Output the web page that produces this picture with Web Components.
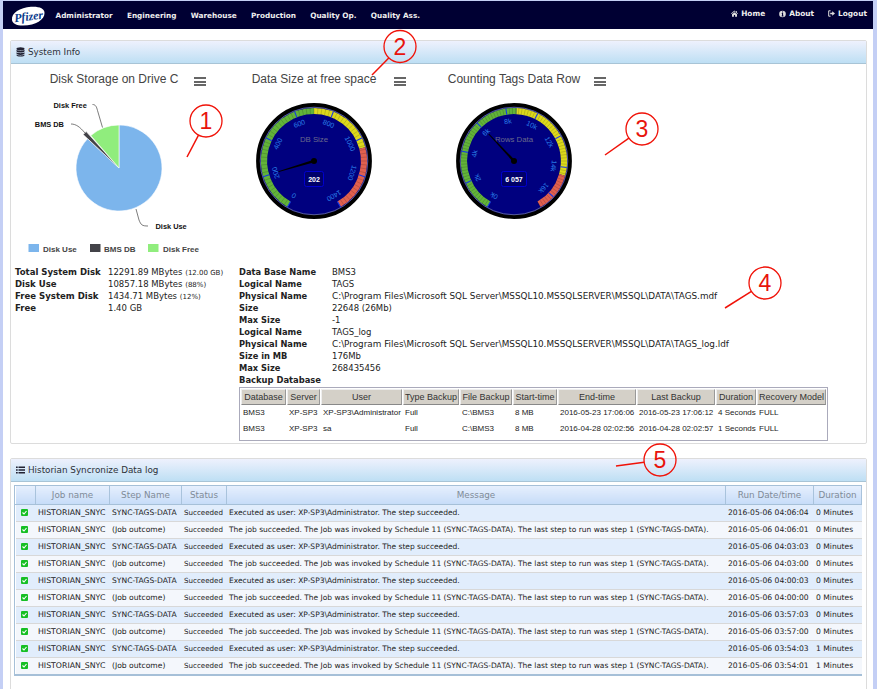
<!DOCTYPE html>
<html lang="en"><head><meta charset="utf-8"><title>System Info</title>
<style>
html,body{margin:0;padding:0;height:689px;overflow:hidden;background:#c4cff5}
body{font-family:"DejaVu Sans",sans-serif;color:#222}
#page{position:relative;background:#fff;margin:1px 4px 0 3px;height:688px;display:flex;flex-direction:column}
</style></head><body>
<div id="page">
<pf-nav></pf-nav>
<pf-panel heading="System Info" icon="db" style="margin:11px 6px 0 7px">
  <pf-charts>
    <pf-chart heading="Disk Storage on Drive C"><pf-pie></pf-pie></pf-chart>
    <pf-chart heading="Data Size at free space"><pf-gauge label="DB Size" max="1400" step="200" value="202" text="202" yellow="0" red="75" suffix=""></pf-gauge></pf-chart>
    <pf-chart heading="Counting Tags Data Row"><pf-gauge label="Rows Data" max="17000" step="2000" value="6057" text="6 057" yellow="3" red="106" suffix="k"></pf-gauge></pf-chart>
  </pf-charts>
  <pf-info></pf-info>
</pf-panel>
<pf-panel heading="Historian Syncronize Data log" icon="list" style="margin:14px 6px -6px 7px;flex:1">
  <pf-grid></pf-grid>
</pf-panel>
<pf-callout n="1" cx="203" cy="120" x2="184" y2="156"></pf-callout>
<pf-callout n="2" cx="397" cy="45.500" x2="369" y2="74"></pf-callout>
<pf-callout n="3" cx="639" cy="128" x2="602" y2="154"></pf-callout>
<pf-callout n="4" cx="762" cy="282" x2="722" y2="307"></pf-callout>
<pf-callout n="5" cx="657" cy="459" x2="613" y2="465"></pf-callout>
</div>
<script>
const def=(name,css,html)=>customElements.define(name,class extends HTMLElement{
  connectedCallback(){ if(this.shadowRoot) return;
    const s=this.attachShadow({mode:'open'});
    s.innerHTML='<style>'+css+'</style>'+(typeof html==='function'?html(this):html);
  }});
const ICON={
 db:'<svg width="9" height="10" viewBox="0 0 9 10"><g fill="#223"><ellipse cx="4.5" cy="1.7" rx="4" ry="1.5"/><path d="M.5 2.8c1.6 1.2 6.4 1.2 8 0v1.4c0 .9-1.8 1.3-4 1.3s-4-.4-4-1.3z"/><path d="M.5 5.3c1.6 1.2 6.4 1.2 8 0v1.3c0 .9-1.8 1.3-4 1.3s-4-.4-4-1.3z"/><path d="M.5 7.6c1.6 1.2 6.4 1.2 8 0v.7c0 .9-1.8 1.3-4 1.3s-4-.4-4-1.3z"/></g></svg>',
 list:'<svg width="9" height="8" viewBox="0 0 9 8"><path fill="#223" d="M0 .5h1.7v1.6H0zM2.500 .5H9v1.6H2.500zM0 3.200h1.700v1.600H0zM2.500 3.200H9v1.600H2.500zM0 5.900h1.700v1.600H0zM2.500 5.900H9v1.600H2.500z"/></svg>',
 home:'<svg width="7" height="7" viewBox="0 0 7 7"><path fill="#ddd" d="M3.5.6 0 3.6l.4.5L3.5 1.500l3.100 2.600.4-.5-1.200-1V.9h-.9v1.400zM1 4.300v2.400h1.900V5h1.200v1.700H6V4.300L3.500 2.200z"/></svg>',
 about:'<svg width="7" height="8" viewBox="0 0 7 8"><circle cx="3.5" cy="4" r="3.3" fill="#ddd"/><path fill="#003" d="M3 1.500h1.100v1H3zM2.700 3h1.400v2.600h.4v.8H2.600v-.8H3V3.800h-.3z"/></svg>',
 logout:'<svg width="7" height="7" viewBox="0 0 7 7"><path fill="none" stroke="#ddd" d="M2.600 .8H.7v5.400h1.900"/><path fill="#ddd" d="M2.200 2.700h2V1.200L7 3.500 4.200 5.800V4.300h-2z"/></svg>'};

def('pf-nav',`:host{display:flex;align-items:stretch;height:28px;background:#003;color:#eee;font:bold 7.3px "DejaVu Sans",sans-serif;flex:none}
.logo{margin:5px 0 0 8px;width:34px;height:20px;flex:none}
ul{display:flex;list-style:none;margin:0;padding:0}
.m{margin-left:10.500px;gap:14.300px;align-items:center;height:29px;white-space:nowrap}
.r{margin-left:auto;margin-right:6px;gap:14px;height:25px;align-items:center;font-size:7.400px}
.r li{display:flex;align-items:center;gap:3px}`,
`<svg class="logo" viewBox="0 0 34 20"><path fill="#fff" d="M1 14C0 7 9 1.500 20 .8c8-.5 13.500 1.500 13.500 6.200C33.500 13.500 25 19.500 12 19.500 5 19.500 1.500 17.500 1 14z"/><text x="3" y="14.500" font-family="Liberation Serif,serif" font-style="italic" font-weight="bold" font-size="12" fill="#0b3b8c" textLength="29" transform="rotate(-7 17 10)">Pfizer</text></svg>
<ul class="m"><li>Administrator</li><li>Engineering</li><li>Warehouse</li><li>Production</li><li>Quality Op.</li><li>Quality Ass.</li></ul>
<ul class="r"><li>${ICON.home}Home</li><li>${ICON.about}About</li><li>${ICON.logout}Logout</li></ul>`);

def('pf-panel',`:host{display:flex;flex-direction:column;border:1px solid #dcdcdc;border-radius:2px;background:#fff;flex:none;min-height:0}
header{height:23px;box-sizing:border-box;flex:none;display:flex;align-items:center;gap:3px;padding-left:5px;font-size:8.800px;color:#2c3138;background:linear-gradient(#eef1fd,#bedff4);border-bottom:1px solid #a8c4d6}
svg{display:block}
.b{flex:1;min-height:0}`,
h=>`<header>${ICON[h.getAttribute('icon')]}<span>${h.getAttribute('heading')}</span></header><div class="b"><slot></slot></div>`);

def('pf-charts',`:host{display:flex;padding:5px 0 0 3px;height:197px}`,'<slot></slot>');

def('pf-chart',`:host{display:block;position:relative;width:200px;flex:none}
h3{margin:0;height:21px;padding-top:3px;box-sizing:border-box;text-align:center;font:12px/14px "Liberation Sans",sans-serif;color:#444;white-space:nowrap}
.ham{position:absolute;left:180px;top:8px;width:12px;height:9px;display:flex;flex-direction:column;justify-content:space-between}
.ham i{display:block;height:2px;background:#666}`,
h=>`<h3>${h.getAttribute('heading')}</h3><div class="ham"><i></i><i></i><i></i></div><slot></slot>`);

function polar(cx,cy,r,deg){const a=(deg-90)*Math.PI/180;return [cx+r*Math.cos(a),cy+r*Math.sin(a)]}
function wedge(cx,cy,r,a,b){const p=polar(cx,cy,r,a),q=polar(cx,cy,r,b);return `M${cx} ${cy}L${p[0]} ${p[1]}A${r} ${r} 0 ${b-a>180?1:0} 1 ${q[0]} ${q[1]}Z`}

def('pf-pie',`:host{display:block;width:200px;height:172px}
svg{display:block}
text{font-family:"Liberation Sans",sans-serif;font-weight:bold}
.d{font-size:7.400px;fill:#111}.l{font-size:8px;fill:#444}`,
()=>{const cx=105,cy=78,r=43;
return `<svg width="200" height="172" viewBox="0 0 200 172">
<path d="${wedge(cx,cy,r,0,313)}" fill="#7cb5ec" stroke="#fff" stroke-width=".6"/>
<path d="${wedge(cx,cy,49,313,318)}" fill="#434348" stroke="#fff" stroke-width=".6"/>
<path d="${wedge(cx,cy,r,319,360)}" fill="#90ed7d" stroke="#fff" stroke-width=".6"/>
<g fill="none" stroke="#444" stroke-width=".7">
<path d="M78.500 14.500c3 0 4 2 5 6l5 17"/><path d="M57 34c5 0 9 3 14 9"/><path d="M134 136c-6 0-7-1-9-6l-3-11"/></g>
<text class="d" x="39.500" y="18">Disk Free</text><text class="d" x="20.800" y="37">BMS DB</text><text class="d" x="141.500" y="139">Disk Use</text>
<rect x="14.500" y="154" width="10.500" height="8" fill="#7cb5ec"/><text class="l" x="29" y="162">Disk Use</text>
<rect x="76" y="154" width="10.500" height="8" fill="#434348"/><text class="l" x="90" y="162">BMS DB</text>
<rect x="134" y="154" width="10.500" height="8" fill="#90ed7d"/><text class="l" x="149" y="162">Disk Free</text>
</svg>`});

def('pf-gauge',`:host{display:block;width:200px;height:172px}
svg{display:block}text{font-family:"Liberation Sans",sans-serif}`,
h=>{const max=+h.getAttribute('max'),step=+h.getAttribute('step'),val=+h.getAttribute('value'),ya=+h.getAttribute('yellow'),ra=+h.getAttribute('red'),suf=h.getAttribute('suffix'),cx=100,cy=71;
const ang=v=>-150+300*v/max;
const arc=(r,a,b)=>{const p=polar(cx,cy,r,a),q=polar(cx,cy,r,b);return `M${p[0]} ${p[1]}A${r} ${r} 0 ${b-a>180?1:0} 1 ${q[0]} ${q[1]}`};
let out=`<circle cx="${cx}" cy="${cy}" r="56" fill="#00007f" stroke="#000" stroke-width="3.800"/><circle cx="${cx}" cy="${cy}" r="53.800" fill="none" stroke="#7c82a8" stroke-width=".7"/>`;
out+=`<path d="${arc(50,-150,ya)}" fill="none" stroke="#62b33a" stroke-width="6.200"/><path d="${arc(50,ya,ra)}" fill="none" stroke="#dcd81c" stroke-width="6.200"/><path d="${arc(50,ra,150)}" fill="none" stroke="#e0604f" stroke-width="6.200"/>`;
const sub=step/10;
for(let v=0;v<=max+1;v+=sub){const a=ang(v),p=polar(cx,cy,46.900,a),q=polar(cx,cy,53.100,a),maj=Math.abs(v/step-Math.round(v/step))<.01;
 out+=`<line x1="${p[0]}" y1="${p[1]}" x2="${q[0]}" y2="${q[1]}" stroke="${maj?'#1438e8':'#000'}" stroke-opacity="${maj?1:.3}" stroke-width="${maj?1.100:.5}"/>`}
for(let v=0;v<=max;v+=step){const a=ang(v),p=polar(cx,cy,39.500,a),t=suf?(v/1000)+suf:v;
 out+=`<text x="${p[0]}" y="${p[1]}" font-size="7" fill="#2a80ea" text-anchor="middle" dominant-baseline="middle" transform="rotate(${a} ${p[0]} ${p[1]})">${t}</text>`}
out+=`<text x="${cx}" y="${cy-19}" font-size="7.800" fill="#6a6a8c" text-anchor="middle">${h.getAttribute('label')}</text>`;
const A=ang(val),t0=polar(cx,cy,37,A),b1=polar(cx,cy,1.200,A+90),b2=polar(cx,cy,1.200,A-90),tipA=[t0[0]+(b1[0]-cx)*.4,t0[1]+(b1[1]-cy)*.4],tipB=[t0[0]+(b2[0]-cx)*.4,t0[1]+(b2[1]-cy)*.4];
out+=`<path d="M${tipA[0]} ${tipA[1]}L${b1[0]} ${b1[1]}L${b2[0]} ${b2[1]}L${tipB[0]} ${tipB[1]}Z" fill="#000"/><circle cx="${cx}" cy="${cy}" r="3" fill="#000"/>`;
const txt=h.getAttribute('text'),w=txt.length>3?25:19;
out+=`<rect x="${cx-w/2}" y="${cy+10.500}" width="${w}" height="15" rx="2" fill="#00006a" stroke="#0000d0"/><text x="${cx}" y="${cy+20.500}" font-size="7" font-weight="bold" fill="#fff" text-anchor="middle">${txt}</text>`;
return `<svg width="200" height="172" viewBox="0 0 200 172">${out}</svg>`});

const kv=rows=>rows.map(([k,v])=>`<b>${k}</b><span>${v}</span>`).join('');
def('pf-info',`:host{display:flex;padding:0 0 0 4px;font-size:8.500px;line-height:12px;color:#222;height:177px}
.kv{display:grid;grid-template-columns:93px 1fr;grid-auto-rows:12px;white-space:nowrap;align-content:start}
.l{width:224px;flex:none}
.l b{font-size:8.550px}
b{font-size:8.300px}
small{font-size:7px}
.p{font-size:8.830px}
h4{margin:0;font-size:8.400px;line-height:12px;font-weight:bold}`,
`<div class="kv l">${kv([['Total System Disk','12291.89 MBytes <small>(12.00 GB)</small>'],['Disk Use','10857.18 MBytes <small>(88%)</small>'],['Free System Disk','1434.71 MBytes <small>(12%)</small>'],['Free','1.40 GB']])}</div>
<div><div class="kv">${kv([['Data Base Name','BMS3'],['Logical Name','TAGS'],['Physical Name','<span class="p">C:\\Program Files\\Microsoft SQL Server\\MSSQL10.MSSQLSERVER\\MSSQL\\DATA\\TAGS.mdf</span>'],['Size','22648 (26Mb)'],['Max Size','-1'],['Logical Name','TAGS_log'],['Physical Name','<span class="p">C:\\Program Files\\Microsoft SQL Server\\MSSQL10.MSSQLSERVER\\MSSQL\\DATA\\TAGS_log.ldf</span>'],['Size in MB','176Mb'],['Max Size','268435456']])}</div><h4>Backup Database</h4><pf-backup></pf-backup></div>`);

def('pf-backup',`:host{display:block;width:587px;height:51px;margin-top:1px;border:1px solid #aab;padding-top:1px;overflow:hidden}
table{border-collapse:separate;border-spacing:1px 0;table-layout:fixed;width:587px;font:8px "Liberation Sans",sans-serif;color:#222}
th{height:16px;padding:0;font-size:9px;font-weight:normal;color:#333;background:#d4d0c8;border-right:1px solid #999;border-bottom:1px solid #888;border-top:1px solid #eee;border-left:1px solid #eee;box-sizing:border-box;white-space:nowrap;overflow:hidden}
td{height:15.500px;padding:0 0 0 2px;white-space:nowrap;overflow:hidden}`,
()=>{const cols=[45,33,81,56,52,44,78,78,40,69];
const heads=['Database','Server','User','Type Backup','File Backup','Start-time','End-time','Last Backup','Duration','Recovery Model'];
const rows=[['BMS3','XP-SP3','XP-SP3\\Administrator','Full','C:\\BMS3','8 MB','2016-05-23 17:06:06','2016-05-23 17:06:12','4 Seconds','FULL'],['BMS3','XP-SP3','sa','Full','C:\\BMS3','8 MB','2016-04-28 02:02:56','2016-04-28 02:02:57','1 Seconds','FULL']];
return `<table><colgroup>${cols.map(c=>`<col style="width:${c}px">`).join('')}</colgroup><thead><tr>${heads.map(x=>`<th>${x}</th>`).join('')}</tr></thead><tbody>${rows.map(r=>`<tr>${r.map(c=>`<td>${c}</td>`).join('')}</tr>`).join('')}</tbody></table>`});

def('pf-grid',`:host{display:block;margin:3px 4px 0 3px;border:1px solid #a6c0d8;border-bottom-width:2px}
table{border-collapse:collapse;table-layout:fixed;width:846px;font:7.600px "DejaVu Sans",sans-serif;color:#222}
th{height:18px;padding:0;font-size:8.800px;font-weight:normal;color:#7f8b98;background:linear-gradient(#e6effd,#c6dcf8);border-left:1px solid #fff;border-right:1px solid #a9c3dc;border-bottom:1px solid #a6c0d8;box-sizing:border-box}
td{height:17px;padding:0 0 0 2.500px;box-sizing:border-box;white-space:nowrap;overflow:hidden;border-bottom:1px solid #d8d8d8}
tr:nth-child(odd) td{background:#e1edfc}tr:nth-child(even) td{background:#f4f7fc}
tr:last-child td{border-bottom:0}
td:first-child{padding:0 0 0 5.500px}
td:nth-child(2){font-size:7.800px}td:nth-child(4){font-size:7.100px}td:nth-child(5){font-size:7.500px}
svg{display:block}`,
()=>{const cols=[20,74,72,45,499,88,48],heads=['','Job name','Step Name','Status','Message','Run Date/time','Duration'];
const m1='Executed as user: XP-SP3\\Administrator. The step succeeded.',m2='The job succeeded. The Job was invoked by Schedule 11 (SYNC-TAGS-DATA). The last step to run was step 1 (SYNC-TAGS-DATA).';
const t=['04:06:04','04:06:01','04:03:03','04:03:00','04:00:03','04:00:00','03:57:03','03:57:00','03:54:03','03:54:01'];
const chk='<svg width="7" height="7" viewBox="0 0 7 7"><rect width="7" height="7" rx="1" fill="#16bf24"/><path d="M1.500 3.500 3 5l2.500-3" fill="none" stroke="#fff" stroke-width="1.100"/></svg>';
return `<table><colgroup>${cols.map(c=>`<col style="width:${c}px">`).join('')}</colgroup><thead><tr>${heads.map(x=>`<th>${x}</th>`).join('')}</tr></thead><tbody>${t.map((x,i)=>{const o=i%2==0;return `<tr><td>${chk}</td><td>HISTORIAN_SNYC</td><td>${o?'SYNC-TAGS-DATA':'(Job outcome)'}</td><td>Succeeded</td><td>${o?m1:m2}</td><td>2016-05-06 ${x}</td><td>${i>7?1:0} Minutes</td></tr>`}).join('')}</tbody></table>`});

def('pf-callout',`:host{position:absolute;left:0;top:0;width:0;height:0;pointer-events:none}
svg{position:absolute;left:0;top:0;overflow:visible}
text{font:23px "Liberation Sans",sans-serif;fill:#e8140c}`,
h=>{const cx=+h.getAttribute('cx'),cy=+h.getAttribute('cy'),x2=+h.getAttribute('x2'),y2=+h.getAttribute('y2');
const d=Math.hypot(x2-cx,y2-cy),sx=cx+(x2-cx)*16/d,sy=cy+(y2-cy)*16/d;
return `<svg width="1" height="1"><circle cx="${cx}" cy="${cy}" r="16" fill="none" stroke="#f01208" stroke-width="1.300"/><line x1="${sx}" y1="${sy}" x2="${x2}" y2="${y2}" stroke="#f01208" stroke-width="1.500"/><text x="${cx}" y="${cy+8}" text-anchor="middle">${h.getAttribute('n')}</text></svg>`});
</script>
</body></html>
